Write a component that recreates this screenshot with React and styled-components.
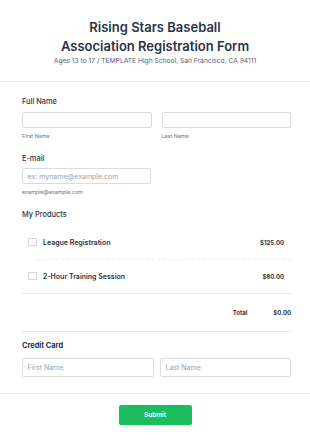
import React from "react";
import styled, { createGlobalStyle } from "styled-components";

const Global = createGlobalStyle`
  html, body { margin: 0; padding: 0; background: #ffffff; }
  body { font-family: Inter, "Noto Sans", sans-serif; color: #2c3345; -webkit-font-smoothing: antialiased; }
  * { box-sizing: border-box; }
`;

const Page = styled.div`
  width: 310px;
  background: #fff;
`;

const Header = styled.header`
  padding: 17.5px 0 0;
  height: 82px;
  border-bottom: 1px solid #eaebef;
  text-align: center;
`;

const Title = styled.h1`
  margin: 0;
  font-size: 13px;
  line-height: 19px;
  font-weight: 600;
  color: #2c3345;
`;

const Subtitle = styled.p`
  margin: 1.5px 0 0;
  font-size: 6.7px;
  line-height: 9px;
  color: #57647e;
`;

const Body = styled.main`
  padding: 15px 19px 0 22px;
  display: flex;
  flex-direction: column;
`;

const Label = styled.div`
  font-size: 7.4px;
  line-height: 10px;
  font-weight: ${(p) => (p.$bold ? 700 : 500)};
  color: #2c3345;
  margin-top: ${(p) => p.$mt || 0}px;
`;

const Row = styled.div`
  display: flex;
  gap: ${(p) => p.$gap}px;
  margin-top: ${(p) => p.$mt}px;
`;

const FieldCol = styled.div`
  display: flex;
  flex-direction: column;
  width: ${(p) => p.$w}px;
`;

const Input = styled.div`
  height: ${(p) => p.$h || 16}px;
  width: 100%;
  border: 1px solid #d9dce4;
  border-radius: 2px;
  background: #fff;
  display: flex;
  align-items: center;
  padding-left: 4.5px;
  font-size: 7px;
  color: #9aa1b0;
`;

const SubLabel = styled.div`
  margin-top: 4px;
  font-size: 5.4px;
  line-height: 8px;
  color: #6b7489;
`;

const Products = styled.div`
  display: flex;
  flex-direction: column;
  margin-top: 6px;
`;

const ProductRow = styled.div`
  display: flex;
  align-items: center;
  height: ${(p) => p.$h}px;
  padding: 0 7px 0 6px;
  border-bottom: ${(p) => (p.$solid ? "1px solid #eaebef" : "none")};
`;

const Check = styled.span`
  width: 8.5px;
  height: 8.5px;
  border: 1px solid #d2d5de;
  border-radius: 1px;
  flex-shrink: 0;
`;

const ProductName = styled.span`
  margin-left: 6.5px;
  font-size: 7px;
  font-weight: 600;
  color: #2c3345;
  flex: 1;
`;

const Price = styled.span`
  font-size: 6px;
  font-weight: 700;
  color: #2c3345;
`;

const DashDivider = styled.div`
  margin-left: 14px;
  border-top: 1px dashed #eceef2;
`;

const TotalRow = styled.div`
  height: 38px;
  display: flex;
  align-items: center;
  justify-content: flex-end;
  border-bottom: 1px solid #eaebef;
  font-size: 6px;
  font-weight: 700;
  color: #2c3345;
`;

const TotalLabel = styled.span`
  margin-right: 26px;
`;

const Footer = styled.footer`
  margin-top: 16px;
  border-top: 1px solid #eaebef;
  display: flex;
  justify-content: center;
  padding-top: 11px;
`;

const Button = styled.button`
  width: 73px;
  height: 20px;
  border: none;
  border-radius: 2px;
  background: #1bbd5c;
  color: #fff;
  font-family: inherit;
  font-size: 6.5px;
  font-weight: 600;
  padding: 0;
`;

export default function App() {
  return (
    <Page>
      <Global />
      <Header>
        <Title>
          Rising Stars Baseball
          <br />
          Association Registration Form
        </Title>
        <Subtitle>Ages 13 to 17 / TEMPLATE High School, San Francisco, CA 94111</Subtitle>
      </Header>
      <Body>
        <Label>Full Name</Label>
        <Row $gap={10} $mt={5}>
          <FieldCol $w={129.5}>
            <Input />
            <SubLabel>First Name</SubLabel>
          </FieldCol>
          <FieldCol $w={129.5}>
            <Input />
            <SubLabel>Last Name</SubLabel>
          </FieldCol>
        </Row>
        <Label $mt={13.5}>E-mail</Label>
        <Row $gap={0} $mt={4.5}>
          <FieldCol $w={128.5}>
            <Input>ex: myname@example.com</Input>
            <SubLabel>example@example.com</SubLabel>
          </FieldCol>
        </Row>
        <Label $mt={13.5}>My Products</Label>
        <Products>
          <ProductRow $h={33}>
            <Check />
            <ProductName>League Registration</ProductName>
            <Price>$125.00</Price>
          </ProductRow>
          <DashDivider />
          <ProductRow $h={34} $solid>
            <Check />
            <ProductName>2-Hour Training Session</ProductName>
            <Price>$80.00</Price>
          </ProductRow>
        </Products>
        <TotalRow>
          <TotalLabel>Total</TotalLabel>
          <span>$0.00</span>
        </TotalRow>
        <Label $mt={9} $bold>Credit Card</Label>
        <Row $gap={6.5} $mt={7.5}>
          <FieldCol $w={131.5}>
            <Input $h={19}>First Name</Input>
          </FieldCol>
          <FieldCol $w={131}>
            <Input $h={19}>Last Name</Input>
          </FieldCol>
        </Row>
      </Body>
      <Footer>
        <Button>Submit</Button>
      </Footer>
    </Page>
  );
}
